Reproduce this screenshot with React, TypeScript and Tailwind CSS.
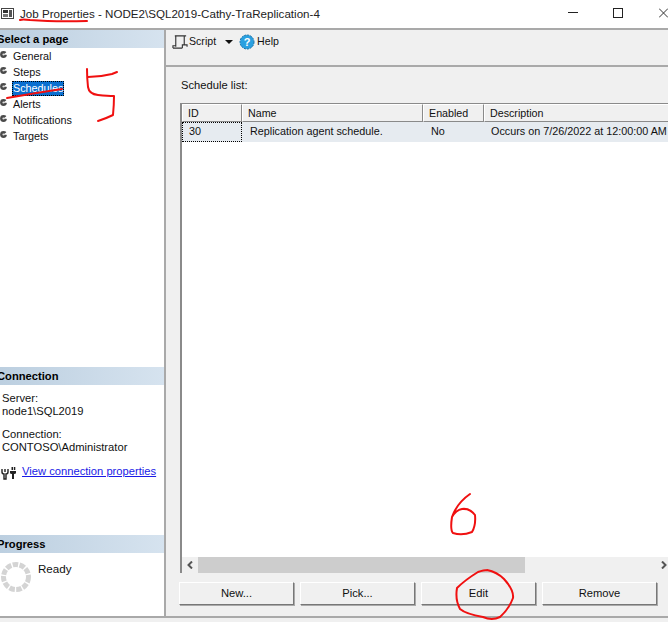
import React from "react";

const pages = ["General", "Steps", "Schedules", "Alerts", "Notifications", "Targets"];

function Bullet() {
  return (
    <svg width="9" height="9" viewBox="0 0 9 9" className="shrink-0">
      <circle cx="3.5" cy="4.5" r="3.4" fill="#4a4a4a" />
      <circle cx="3.5" cy="4.5" r="1.1" fill="#ddd" />
      <path d="M3.5 4.5 L8 1 V5 Z" fill="#fff" />
    </svg>
  );
}

function Section({ title }: { title: string }) {
  return (
    <div className="h-[18px] shrink-0 bg-gradient-to-r from-[#bccfe0] to-[#d6e3ef] font-bold text-[11.2px] leading-[18px] text-black overflow-hidden whitespace-nowrap">
      <span className="-ml-[3px] inline-block">{title}</span>
    </div>
  );
}

function Btn({ label }: { label: string }) {
  return (
    <div className="w-[115px] h-[23px] bg-[#f0f0f0] border border-t-white border-l-white border-r-[#777] border-b-[#777] shadow-[1px_1px_0_#aaa] flex items-center justify-center text-[11.2px] text-[#111]">
      {label}
    </div>
  );
}

function HeadCell({ label, className }: { label: string; className: string }) {
  return (
    <div className={`h-[18px] shrink-0 bg-[#f0f0f0] border border-t-white border-l-white border-r-[#8a8a8a] border-b-[#8a8a8a] pl-[5px] leading-[17px] text-[10.7px] whitespace-nowrap overflow-hidden ${className}`}>
      {label}
    </div>
  );
}

export default function App() {
  return (
    <div className="relative w-[668px] h-[622px] overflow-hidden bg-white flex flex-col font-['Liberation_Sans',Arial,sans-serif] text-[11.2px] text-[#111]">
      {/* title bar */}
      <div className="h-[30px] shrink-0 flex items-center border-b-2 border-[#a9a9a9] bg-white">
        <svg width="14" height="12" viewBox="0 0 14 12" className="ml-[1px] shrink-0">
          <rect x="0.5" y="0.5" width="12" height="10" fill="#fff" stroke="#444" />
          <rect x="2" y="2" width="5" height="3" fill="#333" />
          <rect x="8" y="2" width="3" height="7" fill="#555" />
          <rect x="2" y="6" width="5" height="3" fill="#777" />
        </svg>
        <div className="ml-[5px] text-[11.6px] whitespace-nowrap text-[#222]">Job Properties - NODE2\SQL2019-Cathy-TraReplication-4</div>
        <div className="ml-auto flex items-center -mt-[2px]">
          <svg width="10" height="2" viewBox="0 0 10 2" className="mr-[35px]"><rect width="10" height="1" fill="#222" /></svg>
          <svg width="10" height="10" viewBox="0 0 10 10" className="mr-[36px]"><rect x="0.5" y="0.5" width="9" height="9" fill="none" stroke="#222" /></svg>
          <svg width="9" height="10" viewBox="0 0 9 10"><path d="M0 0.5 L9 9.5 M9 0.5 L0 9.5" stroke="#333" fill="none" /></svg>
        </div>
      </div>

      <div className="flex h-[586px] shrink-0">
        {/* left panel */}
        <div className="w-[166px] shrink-0 bg-white border-r-2 border-[#a9a9a9] flex flex-col">
          <Section title="Select a page" />
          <div className="flex flex-col text-[10.8px]">
            {pages.map((p) => (
              <div key={p} className="h-4 flex items-center">
                <span className="-mt-[3px]"><Bullet /></span>
                <span
                  className={
                    p === "Schedules"
                      ? "ml-[3px] h-[15px] leading-[14px] px-[1px] bg-[#0a6fd0] text-white outline-1 outline-dotted outline-black -outline-offset-1"
                      : "ml-[4px]"
                  }
                >
                  {p}
                </span>
              </div>
            ))}
          </div>
          <div className="h-[223px] shrink-0" />
          <Section title="Connection" />
          <div className="pl-[2px] pt-[7px] leading-[13px]">
            <div>Server:</div>
            <div>node1\SQL2019</div>
            <div className="mt-[10px]">Connection:</div>
            <div>CONTOSO\Administrator</div>
          </div>
          <div className="flex items-center mt-[9px] pl-[1px] h-[17px]">
            <svg width="16" height="14" viewBox="0 0 16 14" className="shrink-0 mt-[3px]">
              <path d="M1 3 V6 Q1 8 3 8 V13 H5 V8 Q7 8 7 6 V3 M4 3 V6" stroke="#222" strokeWidth="1.4" fill="none" />
              <path d="M9 5 H15 V7 Q15 8 13 8 V13 H11 V8 Q9 8 9 7 Z" fill="#222" />
              <rect x="10.5" y="1" width="1.5" height="3" fill="#222" />
              <rect x="12.8" y="1" width="1.5" height="3" fill="#222" />
            </svg>
            <span className="ml-[5px] text-[#1a1ae6] underline whitespace-nowrap">View connection properties</span>
          </div>
          <div className="h-[55px] shrink-0" />
          <Section title="Progress" />
          <div className="flex pl-[1px] pt-[9px]">
            <svg width="30" height="30" viewBox="0 0 30 30" className="shrink-0">
              <circle cx="15" cy="15" r="12.5" fill="none" stroke="#d4d4d4" strokeWidth="5" strokeDasharray="5.5 1.4" />
            </svg>
            <span className="ml-[7px] text-[11.6px] leading-[13px]">Ready</span>
          </div>
        </div>

        {/* right panel */}
        <div className="w-[502px] shrink-0 bg-[#f0f0f0] flex flex-col">
          <div className="h-[35px] shrink-0 flex items-center pl-[6px] pb-[11px] text-[10.6px]">
            <svg width="16" height="16" viewBox="0 0 17 16" className="shrink-0">
              <path d="M3 1.5 H15 M4 1.5 V13 M13 1.5 V11 M1 14.5 H11 M1 14.5 V12 H4 M11 14.5 V11 H16 V13" stroke="#333" strokeWidth="1.2" fill="none" />
            </svg>
            <span className="ml-[1px]">Script</span>
            <svg width="8" height="4" viewBox="0 0 8 4" className="ml-[9px] shrink-0"><path d="M0 0 H8 L4 4 Z" fill="#111" /></svg>
            <svg width="16" height="16" viewBox="0 0 16 16" className="ml-[6px] shrink-0">
              <circle cx="8" cy="8" r="7" fill="#2aa0e0" stroke="#1470a8" strokeDasharray="2 1" />
              <text x="8" y="12" textAnchor="middle" fontSize="11" fontWeight="700" fill="#fff" fontFamily="Liberation Sans">?</text>
            </svg>
            <span className="ml-[2px]">Help</span>
          </div>
          <div className="h-[2px] shrink-0 bg-[#a9a9a9]" />
          <div className="pl-[15px] pt-[11px] leading-[14px] h-[36px] shrink-0">Schedule list:</div>

          {/* grid */}
          <div className="ml-[14px] w-[488px] h-[470px] shrink-0 bg-white border-l-2 border-t border-[#8a8a8a] flex flex-col overflow-hidden">
            <div className="flex shrink-0 h-[18px]">
              <HeadCell label="ID" className="w-[60px]" />
              <HeadCell label="Name" className="w-[181px]" />
              <HeadCell label="Enabled" className="w-[61px]" />
              <HeadCell label="Description" className="w-[200px]" />
            </div>
            <div className="flex shrink-0 h-[20px] bg-[#e6ebf0] leading-[19px] text-[10.8px] whitespace-nowrap">
              <div className="w-[60px] shrink-0 pl-[7px] outline-1 outline-dotted outline-black -outline-offset-1">30</div>
              <div className="w-[181px] shrink-0 pl-[8px]">Replication agent schedule.</div>
              <div className="w-[61px] shrink-0 pl-[8px]">No</div>
              <div className="w-[200px] shrink-0 pl-[7px]">Occurs on 7/26/2022 at 12:00:00 AM</div>
            </div>
            <div className="flex-1" />
            <div className="h-[16px] shrink-0 bg-[#f0f0f0] flex items-center">
              <div className="w-[16px] shrink-0 flex justify-center">
                <svg width="6" height="8" viewBox="0 0 6 8"><path d="M5 0.5 L1.5 4 L5 7.5" stroke="#555" strokeWidth="2" fill="none" /></svg>
              </div>
              <div className="w-[327px] h-full shrink-0 bg-[#cdcdcd]" />
              <div className="flex-1 flex justify-end pr-[1px]">
                <svg width="6" height="8" viewBox="0 0 6 8"><path d="M1 0.5 L4.5 4 L1 7.5" stroke="#555" strokeWidth="2" fill="none" /></svg>
              </div>
            </div>
          </div>

          <div className="flex gap-[6px] ml-[13px] mt-[9px] shrink-0">
            <Btn label="New..." />
            <Btn label="Pick..." />
            <Btn label="Edit" />
            <Btn label="Remove" />
          </div>
        </div>
      </div>

      {/* bottom strip */}
      <div className="absolute left-0 right-0 top-[616px] h-[6px] bg-[#f0f0f0] border-t-2 border-[#a9a9a9]" />

      {/* red pen annotations */}
      <svg className="absolute inset-0 pointer-events-none" width="668" height="622" viewBox="0 0 668 622">
        <g fill="none" stroke="#f01010" strokeWidth="2" strokeLinecap="round" strokeLinejoin="round">
          <path d="M20 20 Q22 19 30 20 Q55 22 87 21" />
          <path d="M7 98 Q35 93 62 89" />
          <path d="M87 69 Q87 78 88 87 Q89 94 98 95 Q108 96 114 96 Q114 105 113 115 Q107 118 98 121" />
          <path d="M88 77 Q100 77 112 74 L117 72" />
          <path d="M470 494 Q457 503 452 517 Q450 530 453 533 Q462 536 472 532 Q476 525 475 515 Q470 508 462 509 Q456 510 452 517" />
          <path d="M487 570 Q497 572 504 579 Q514 590 513 598 Q509 609 500 617 Q492 621 483 617 Q466 614 460 609 Q455 600 457 588 Q465 580 478 572 Q484 570 487 570" />
        </g>
      </svg>
    </div>
  );
}
